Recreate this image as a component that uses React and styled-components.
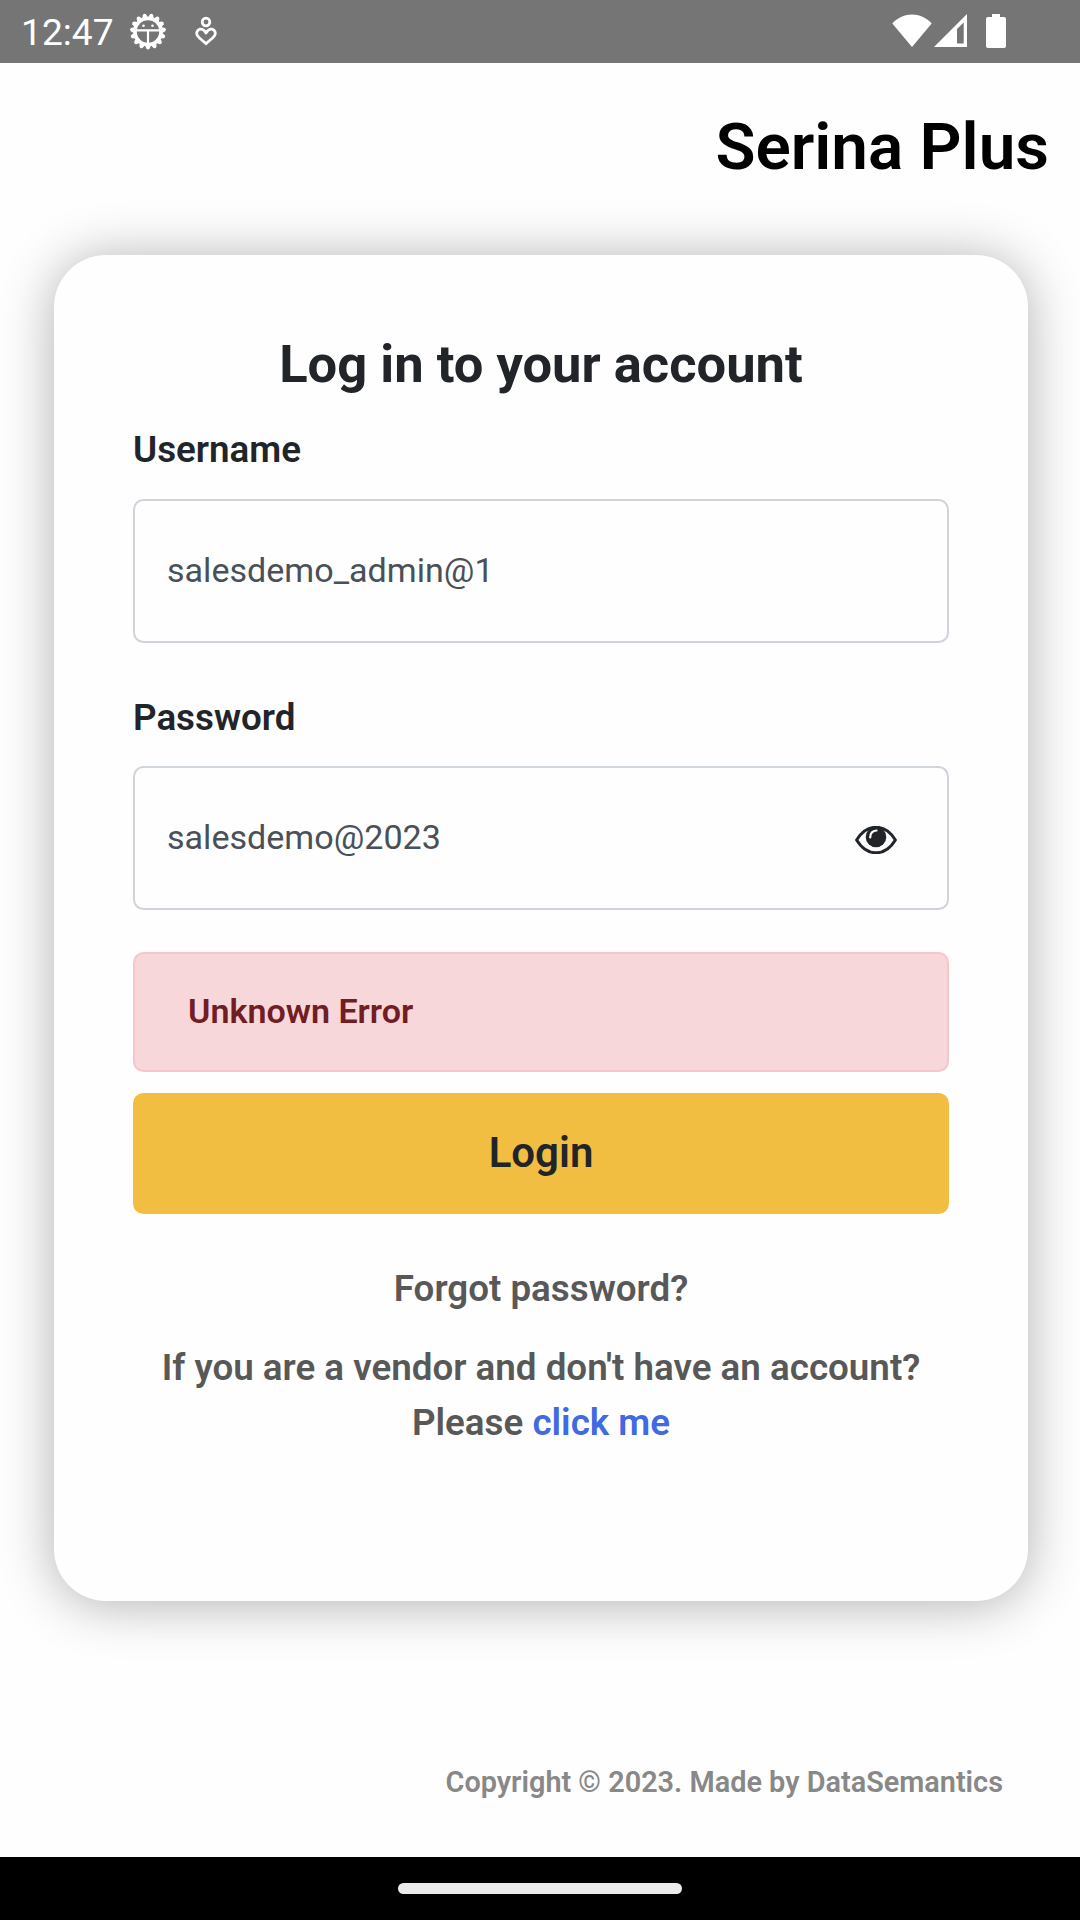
import React from 'react';
import styled, { createGlobalStyle } from 'styled-components';

const Global = createGlobalStyle`
  * { box-sizing: border-box; }
  body { margin: 0; background: #fefefe; font-family: Roboto, "Liberation Sans", sans-serif; color: #212529; }
  h1, h2, p { margin: 0; }
`;
const Screen = styled.div`
  width: 1080px; height: 1920px; display: flex; flex-direction: column; overflow: hidden; background: #fefefe;
`;
const StatusBar = styled.header`
  height: 63px; flex: none; display: flex; align-items: flex-start; background: #757575; padding: 0 74px 0 21px;
`;
const Clock = styled.span`
  font-size: 37.2px; line-height: 63px; color: #fff; width: 108px; padding-top: 1px; white-space: nowrap;
`;
const StatusIcons = styled.div`
  display: flex; align-items: center; height: 62px; margin-left: ${p => (p.$end ? 'auto' : '0')};
  svg { display: block; flex: none; }
`;
const Brand = styled.h1`
  height: 192px; flex: none; padding: 44px 31px 0 0; text-align: right; font-size: 65.6px; line-height: 79px; font-weight: 600; color: #000;
`;
const Card = styled.main`
  height: 1346px; flex: none; margin: 0 52px 0 54px; padding: 78px 79px 0; border-radius: 52px; background: #fefefe;
  box-shadow: 0 3px 53px rgba(0, 0, 0, 0.31);
  display: flex; flex-direction: column;
`;
const Title = styled.h2`
  text-align: center; font-size: 52.5px; line-height: 63px; font-weight: 700; white-space: nowrap;
`;
const Label = styled.label`
  display: block; font-size: 36.75px; line-height: 55px; font-weight: 600; margin-top: ${p => p.$top}px; margin-bottom: ${p => p.$bottom}px;
`;
const Field = styled.div`
  height: 144px; border: 2px solid #ced4da; border-radius: 10.5px; padding: 0 50px 2px 32px;
  display: flex; align-items: center; justify-content: space-between; font-size: 34.1px; color: #495057;
`;
const Alert = styled.div`
  margin-top: 42px; height: 120px; border: 2px solid #f5c6cb; border-radius: 10.5px; background: #f8d7da; color: #721c24;
  padding: 0 53px 2px; display: flex; align-items: center; font-size: 34.1px; font-weight: 600;
`;
const LoginButton = styled.button`
  margin: 21px 0 0; height: 121px; border: 0; border-radius: 10.5px; background: #f1be42; color: #212529;
  font: 600 42px/63px Roboto, sans-serif; padding: 0 0 2px;
`;
const Hint = styled.p`
  text-align: center; font-size: 36.75px; line-height: 55px; font-weight: 600; color: #585858; margin-top: ${p => p.$top}px;
`;
const Link = styled.a`color: #4169e1; text-decoration: none;`;
const Copyright = styled.footer`
  flex: 1; padding: 160px 77px 0 0; text-align: right; font-size: 28.85px; line-height: 43px; font-weight: 600; color: #888;
`;
const NavBar = styled.nav`
  height: 63px; flex: none; background: #000; display: flex; justify-content: center; padding-top: 26px;
`;
const NavHandle = styled.div`
  width: 284px; height: 11px; border-radius: 6px; background: #ebebeb;
`;

const GearIcon = () => {
  const teeth = Array.from({ length: 15 }, (_, i) => i * 24 + 180);
  return (
    <svg width="38" height="38" viewBox="-19 -19.5 38 38">
      <circle r="13" fill="none" stroke="#fff" strokeWidth="3.6" />
      {teeth.map(a => (
        <path key={a} d="M-2.9 -14 L-1.6 -17.3 Q0 -18.9 1.6 -17.3 L2.9 -14Z" fill="#fff" transform={`rotate(${a})`} />
      ))}
      <path d="M-12 -1.2H12M0 -1V12" stroke="#fff" strokeWidth="2.2" />
      <circle cx="-4.5" cy="-5.8" r="1.3" fill="#fff" /><circle cx="4.5" cy="-5.8" r="1.3" fill="#fff" />
    </svg>
  );
};
const HeartPersonIcon = () => (
  <svg width="22" height="30" viewBox="0 0 22 30" fill="none" stroke="#fff" strokeWidth="2.8" style={{ marginLeft: 28 }}>
    <circle cx="11" cy="6" r="3.8" />
    <path d="M11 17C9 13.6 6.8 12.8 5 13.2C1.8 14 .8 17.3 2.7 20C4.5 22.3 8 25 11 27.8C14 25 17.5 22.3 19.3 20C21.2 17.3 20.2 14 17 13.2C15.2 12.8 13 13.6 11 17Z" strokeLinejoin="round" />
  </svg>
);
const WifiIcon = () => (
  <svg width="40" height="34" viewBox="0 0 40 34"><path d="M.3 9.5C11.5-2.4 28.5-2.4 39.7 9.5L20 33Z" fill="#fff" /></svg>
);
const SignalIcon = () => (
  <svg width="34" height="34" viewBox="0 0 34 34" style={{ marginLeft: 2 }}>
    <path fillRule="evenodd" d="M0 33L33 0V33ZM23 15V29.5H29.7V8.5Z" fill="#fff" />
  </svg>
);
const BatteryIcon = () => (
  <svg width="20" height="34" viewBox="0 0 20 34" style={{ marginLeft: 18 }}>
    <path d="M6 0H14V3H18Q20 3 20 5V32Q20 34 18 34H2Q0 34 0 32V5Q0 3 2 3H6Z" fill="#fff" />
  </svg>
);
const EyeIcon = () => (
  <svg width="42" height="28" viewBox="0 0 42 28" style={{ marginTop: 6 }}>
    <path d="M1.6 14C12-3 30-3 40.4 14C30 31 12 31 1.6 14Z" fill="none" stroke="#212529" strokeWidth="3" strokeLinejoin="round" />
    <circle cx="21" cy="11" r="10.3" fill="#212529" />
    <path d="M15.2 11.5Q15.2 5 21.5 4.5" fill="none" stroke="#fefefe" strokeWidth="2.2" strokeLinecap="round" />
  </svg>
);

export default function App() {
  return (
    <>
      <Global />
      <Screen>
        <StatusBar>
          <Clock>12:47</Clock>
          <StatusIcons><GearIcon /><HeartPersonIcon /></StatusIcons>
          <StatusIcons $end><WifiIcon /><SignalIcon /><BatteryIcon /></StatusIcons>
        </StatusBar>
        <Brand>Serina Plus</Brand>
        <Card>
          <Title>Log in to your account</Title>
          <Label $top={26} $bottom={22}>Username</Label>
          <Field>salesdemo_admin@1</Field>
          <Label $top={47} $bottom={21}>Password</Label>
          <Field>salesdemo@2023<EyeIcon /></Field>
          <Alert>Unknown Error</Alert>
          <LoginButton>Login</LoginButton>
          <Hint $top={47}>Forgot password?</Hint>
          <Hint $top={24}>If you are a vendor and don't have an account?<br />Please <Link>click me</Link></Hint>
        </Card>
        <Copyright>Copyright © 2023. Made by DataSemantics</Copyright>
        <NavBar><NavHandle /></NavBar>
      </Screen>
    </>
  );
}
